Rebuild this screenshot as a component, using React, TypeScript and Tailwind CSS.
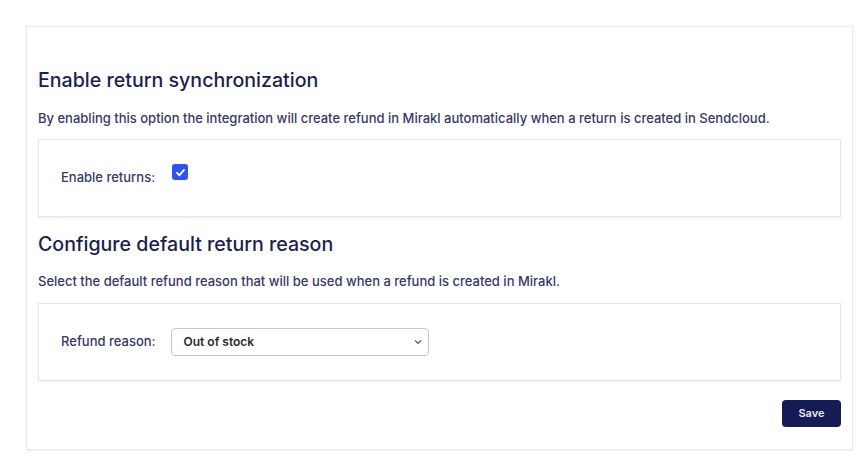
import React from "react";

export default function App() {
  return (
    <div className="w-[867px] h-[468px] bg-white pt-[26px] pl-[26px]" style={{ fontFamily: "Inter, 'Noto Sans', sans-serif" }}>
      <div className="w-[827px] h-[424px] border border-[#ebebeb] shadow-[0_1px_2px_rgba(0,0,0,0.06)] bg-white px-[11px] pt-[40px]">
        <h2 className="text-[19.6px] leading-[26px] font-medium text-[#1b1f4e]">Enable return synchronization</h2>
        <p className="mt-[17px] text-[13px] leading-[16px] font-medium text-[#34386a]">
          By enabling this option the integration will create refund in Mirakl automatically when a return is created in Sendcloud.
        </p>
        <div className="mt-[13px] h-[78px] border border-[#e6e6e6] shadow-[0_1px_2px_rgba(0,0,0,0.08)] flex items-center pl-[22px]">
          <span className="text-[13px] font-medium text-[#34386a]">Enable returns:</span>
          <span className="ml-[17px] -mt-[12px] w-[16px] h-[16px] rounded-[3px] bg-[#2f54eb] flex items-center justify-center">
            <svg width="11" height="11" viewBox="0 0 12 12" fill="none">
              <path d="M2.2 6.3 L4.9 9 L9.8 3.2" stroke="white" strokeWidth="2" strokeLinecap="round" strokeLinejoin="round" />
            </svg>
          </span>
        </div>
        <h2 className="mt-[14px] text-[19.6px] leading-[26px] font-medium text-[#1b1f4e]">Configure default return reason</h2>
        <p className="mt-[16px] text-[13px] leading-[16px] font-medium text-[#34386a]">
          Select the default refund reason that will be used when a refund is created in Mirakl.
        </p>
        <div className="mt-[14px] h-[78px] border border-[#e6e6e6] shadow-[0_1px_2px_rgba(0,0,0,0.08)] flex items-center pl-[22px]">
          <span className="text-[13px] font-medium text-[#34386a]">Refund reason:</span>
          <div className="ml-[15px] w-[258px] h-[28px] border border-[#c8c8c8] rounded-[4px] flex items-center justify-between pl-[12px] pr-[6px]">
            <span className="text-[12px] font-semibold text-[#2a2a2a]">Out of stock</span>
            <svg width="8" height="6" viewBox="0 0 8 6" fill="none">
              <path d="M1.2 1.6 L4 4.4 L6.8 1.6" stroke="#555" strokeWidth="1.3" strokeLinecap="round" strokeLinejoin="round" />
            </svg>
          </div>
        </div>
        <div className="mt-[19px] flex justify-end">
          <button className="w-[59px] h-[27px] rounded-[4px] bg-[#151b54] text-[11px] font-semibold text-[#e6e8f5]">Save</button>
        </div>
      </div>
    </div>
  );
}
